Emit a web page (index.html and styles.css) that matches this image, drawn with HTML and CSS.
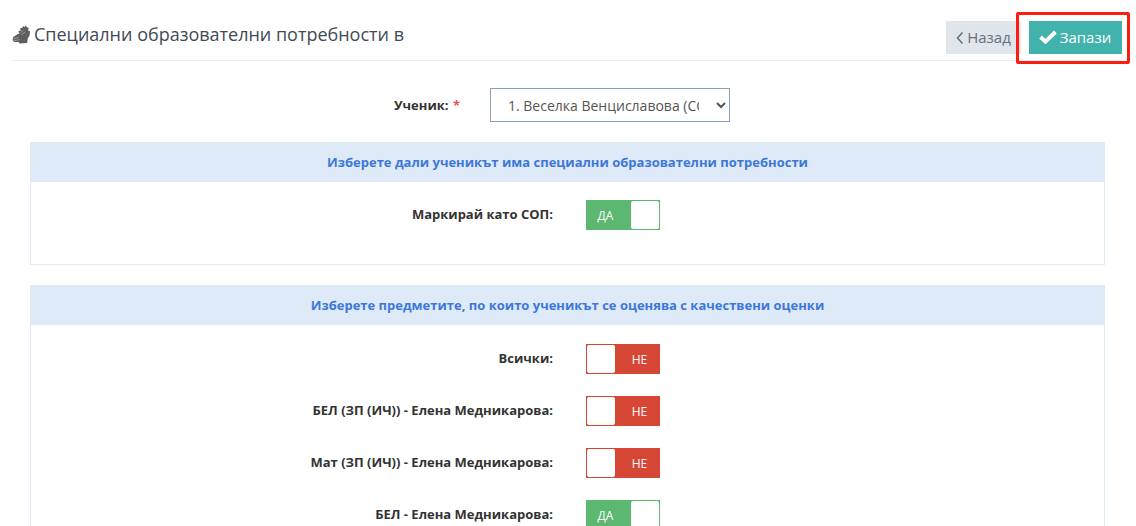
FILE: index.html
```html
<!DOCTYPE html>
<html lang="bg">
<head>
<meta charset="utf-8">
<title>Специални образователни потребности</title>
<link rel="stylesheet" href="styles.css">
</head>
<body>
<div class="page">
  <header class="topbar">
    <h1 class="title">
      <svg class="title-icon" viewBox="0 0 20 20" aria-hidden="true">
        <path d="M8 9 6.5 6.5 9 6 8.5 3.5 11 3 11.5 1 13.5 2 14.5 .5 16 2.5 17.5 3 17 6 19 6.5 18.5 11 16.5 14.5 16 19 8 19.5 7 18 2.5 18 1 16.5 .7 14.5 1.5 12.5 6 9.5Z" fill="#5f5f5f"/>
        <path d="M9 8 12 5.5M10 10.5 14 7M1.5 14.5 7 13M1.8 16.5 8 15.5" fill="none" stroke="#fff" stroke-width=".7" opacity=".55"/>
      </svg>
      <span>Специални образователни потребности в</span>
    </h1>
    <div class="actions">
      <button class="btn btn-back" type="button">
        <svg class="chev" viewBox="0 0 8 14" aria-hidden="true"><path d="M6.5 1.5 1.5 7l5 5.5" fill="none" stroke="currentColor" stroke-width="1.5"/></svg><span class="btn-text">Назад</span>
      </button>
      <span class="save-wrap">
        <button class="btn btn-save" type="button">
          <svg class="check" viewBox="0 0 18 14" aria-hidden="true"><path d="M1.6 7 6.5 11.6 16.4 2" fill="none" stroke="currentColor" stroke-width="4"/></svg><span class="btn-text">Запази</span>
        </button>
        <span class="highlight"></span>
      </span>
    </div>
  </header>

  <div class="student-row">
    <label class="student-label">Ученик: <span class="req">*</span></label>
    <select class="student-select"><option>1. Веселка Венциславова (СОП)</option></select>
  </div>

  <section class="panel panel-first">
    <div class="panel-head">Изберете дали ученикът има специални образователни потребности</div>
    <div class="panel-body panel-body-short">
      <div class="row"><span class="row-label">Маркирай като СОП:</span><span class="toggle on"><span class="t-text">ДА</span><span class="knob"></span></span></div>
    </div>
  </section>

  <section class="panel">
    <div class="panel-head">Изберете предметите, по които ученикът се оценява с качествени оценки</div>
    <div class="panel-body">
      <div class="row"><span class="row-label">Всички:</span><span class="toggle off"><span class="knob"></span><span class="t-text">НЕ</span></span></div>
      <div class="row"><span class="row-label">БЕЛ (ЗП (ИЧ)) - Елена Медникарова:</span><span class="toggle off"><span class="knob"></span><span class="t-text">НЕ</span></span></div>
      <div class="row"><span class="row-label">Мат (ЗП (ИЧ)) - Елена Медникарова:</span><span class="toggle off"><span class="knob"></span><span class="t-text">НЕ</span></span></div>
      <div class="row"><span class="row-label">БЕЛ - Елена Медникарова:</span><span class="toggle on"><span class="t-text">ДА</span><span class="knob"></span></span></div>
    </div>
  </section>
</div>
</body>
</html>
```
FILE: styles.css
```css
* { box-sizing: border-box; }
html, body { margin: 0; height: 526px; overflow: hidden; background: #fff; }
body { font-family: "Open Sans", "Noto Sans", sans-serif; color: #333; }
.page { padding: 0 14px 0 12px; }

.topbar {
  display: flex; justify-content: space-between; align-items: flex-start;
  height: 61px; border-bottom: 1px solid #eceef0;
}
.title {
  display: flex; align-items: center; gap: 3px;
  margin: 21px 0 0; font-size: 18px; font-weight: 400; line-height: 27px; color: #3f4a56;
}
.title-icon { width: 19px; height: 19px; }
.actions { display: flex; gap: 8px; margin-top: 21px; }
.btn {
  display: inline-flex; align-items: center; justify-content: center;
  height: 33px; border: 0; padding: 0; font: 400 15px "Open Sans", sans-serif; cursor: pointer;
}
.btn-text { margin-top: -2px; }
.btn-back { width: 75px; background: #e1e5ec; color: #666f7b; gap: 3px; }
.chev { width: 8px; height: 14px; }
.save-wrap { position: relative; display: inline-flex; }
.btn-save { width: 93px; background: #41b3ac; color: #fff; gap: 3px; padding-right: 1px; }
.check { width: 18px; height: 14px; margin-top: -2px; }
.highlight {
  position: absolute; left: -13px; top: -9px; width: 114px; height: 52px;
  border: 3px solid #fb1e10; border-radius: 2px; pointer-events: none;
}

.student-row {
  display: flex; align-items: center; height: 34px; margin: 27px 0 20px 18px;
}
.student-label { width: 448px; padding-right: 18px; text-align: right; font-size: 13px; font-weight: 700; color: #333; }
.req { color: #e7505a; margin-left: 1px; }
.student-select {
  width: 240px; height: 34px; margin-left: 12px; padding: 0 14px 0 13px;
  border: 1px solid #8c9db8; border-radius: 0; background: #fff; color: #555;
  font: 400 14px "Open Sans", sans-serif;
}

.panel { margin: 0 17px 0 18px; }
.panel-first { margin-bottom: 20px; }
.panel-head {
  height: 40px; background: #dfeaf8; color: #3d78d8;
  font-size: 13px; font-weight: 700; line-height: 40px; text-align: center;
}
.panel-body {
  border: 1px solid #dfeaf8; border-top: 0; padding-top: 19px; display: flex; flex-direction: column; gap: 22px;
}
.panel-body-short { height: 83px; padding-top: 18px; }
.row { display: flex; align-items: center; height: 30px; }
.row-label {
  width: 522px; text-align: right; font-size: 13px; font-weight: 700; color: #333; margin-top: -2px;
}
.toggle {
  display: flex; width: 74px; height: 30px; margin-left: 33px; color: #fff; font-size: 12px;
  border: 1px solid; overflow: hidden;
}
.toggle.on { background: #5cb870; border-color: #5cb870; }
.toggle.off { background: #d64635; border-color: #d64635; }
.t-text { flex: 1; display: flex; align-items: center; justify-content: center; }
.toggle.on .t-text { padding-right: 7px; }
.toggle.off .t-text { padding-left: 5px; }
.knob { width: 28px; height: 28px; background: #fff; border-radius: 2px; }
```
